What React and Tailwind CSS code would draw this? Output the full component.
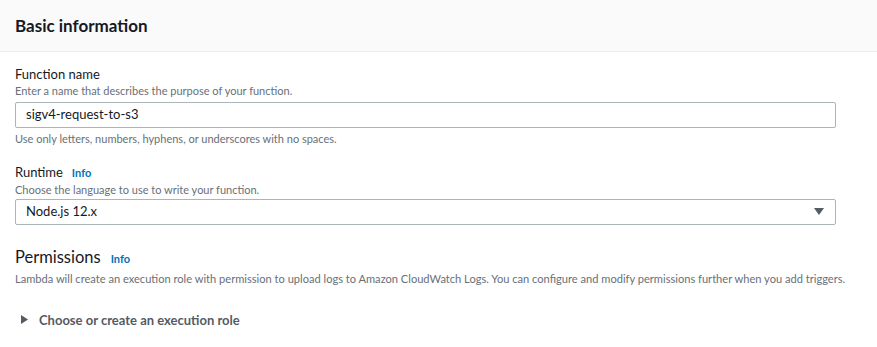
export default function App() {
  return (
    <div className="w-[877px] h-[347px] bg-white overflow-hidden text-[#16191f]" style={{ fontFamily: 'Lato, "Liberation Sans", sans-serif' }}>
      <div className="h-[52px] bg-[#fafafa] border-b border-[#eaeded] flex items-center px-[15px]">
        <h2 className="text-[17px] font-bold leading-none">Basic information</h2>
      </div>

      <div className="px-[15px] pt-[13px]">
        <div className="text-[13px] leading-[18px]">Function name</div>
        <div className="text-[11px] leading-[16px] text-[#687078]">Enter a name that describes the purpose of your function.</div>
        <div className="mt-[3px] w-[821px] h-[26px] border border-[#aab7b8] rounded-[2px] flex items-center px-[10px] text-[13px]">
          sigv4-request-to-s3
        </div>
        <div className="mt-[3px] text-[11px] leading-[16px] text-[#687078]">Use only letters, numbers, hyphens, or underscores with no spaces.</div>

        <div className="mt-[16px] flex items-baseline gap-[9px]">
          <span className="text-[13px] leading-[18px]">Runtime</span>
          <span className="text-[11px] font-bold text-[#0073bb]">Info</span>
        </div>
        <div className="text-[11px] leading-[16px] text-[#687078]">Choose the language to use to write your function.</div>
        <div className="mt-[1px] w-[821px] h-[26px] border border-[#aab7b8] rounded-[2px] flex items-center justify-between px-[10px] text-[13px]">
          <span>Node.js 12.x</span>
          <svg width="10" height="8" viewBox="0 0 10 8" className="mr-[1px]">
            <path d="M0 0 L10 0 L5 7 Z" fill="#545b64" />
          </svg>
        </div>

        <div className="mt-[21px] flex items-baseline gap-[10px]">
          <span className="text-[16.5px] leading-[22px]">Permissions</span>
          <span className="text-[11px] font-bold text-[#0073bb]">Info</span>
        </div>
        <div className="mt-[3px] text-[11.1px] leading-[16px] text-[#687078] whitespace-nowrap">
          Lambda will create an execution role with permission to upload logs to Amazon CloudWatch Logs. You can configure and modify permissions further when you add triggers.
        </div>

        <div className="mt-[24px] flex items-center gap-[11px] pl-[6px]">
          <svg width="7" height="9" viewBox="0 0 7 9">
            <path d="M0 0 L7 4.5 L0 9 Z" fill="#545b64" />
          </svg>
          <span className="text-[13px] font-bold leading-[18px] text-[#545b64]">Choose or create an execution role</span>
        </div>
      </div>
    </div>
  )
}
